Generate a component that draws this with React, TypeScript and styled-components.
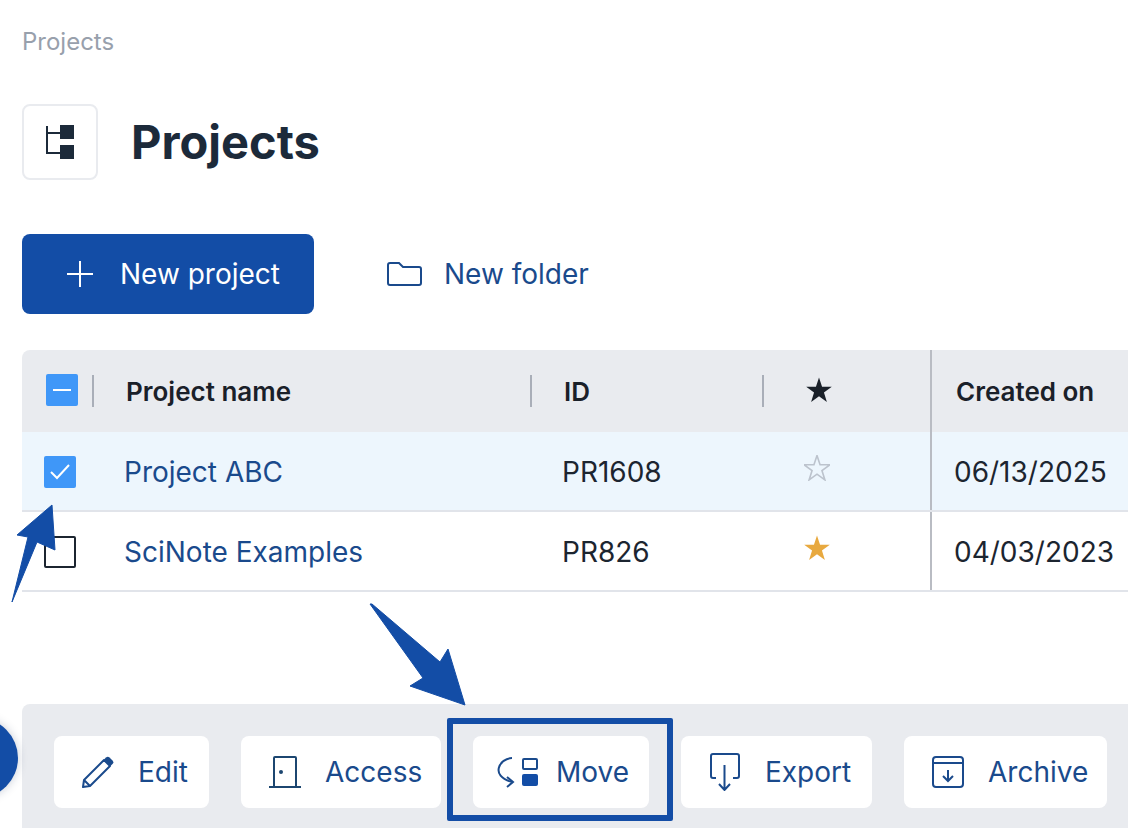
import React from 'react';
import styled, { createGlobalStyle } from 'styled-components';

const GlobalStyle = createGlobalStyle`
  html, body {
    margin: 0;
    padding: 0;
    background: #fff;
    font-family: Inter, "Liberation Sans", sans-serif;
    overflow: hidden;
  }
`;

const Page = styled.div`
  position: relative;
  width: 1128px;
  height: 828px;
  overflow: hidden;
  padding-left: 22px;
  box-sizing: border-box;
  display: flex;
  flex-direction: column;
`;

const Breadcrumb = styled.div`
  height: 84px;
  padding-top: 27px;
  box-sizing: border-box;
  font-size: 24px;
  line-height: 30px;
  color: #98a0ac;
`;

const TitleRow = styled.div`
  display: flex;
  align-items: center;
  gap: 33px;
  height: 76px;
  margin-top: 20px;
`;

const IconBox = styled.div`
  width: 76px;
  height: 76px;
  box-sizing: border-box;
  border: 2px solid #e9ebef;
  border-radius: 8px;
  display: flex;
  align-items: center;
  justify-content: center;
`;

const Title = styled.h1`
  margin: 0 0 2px;
  font-size: 47px;
  font-weight: 700;
  color: #1c2a3a;
`;

const Actions = styled.div`
  display: flex;
  align-items: center;
  margin-top: 54px;
  gap: 72px;
`;

const PrimaryButton = styled.div`
  width: 292px;
  height: 80px;
  box-sizing: border-box;
  padding-left: 44px;
  display: flex;
  align-items: center;
  gap: 26px;
  border-radius: 8px;
  background: #134da6;
  color: #fff;
  font-size: 28px;
`;

const GhostButton = styled.div`
  display: flex;
  align-items: center;
  gap: 21px;
  color: #1a4a8c;
  font-size: 28px;
`;

const Table = styled.div`
  width: 1300px;
  margin-top: 36px;
`;

const Row = styled.div<{ $kind: 'head' | 'selected' | 'plain' }>`
  display: grid;
  grid-template-columns: 72px 438px 232px 166px 1fr;
  box-sizing: border-box;
  height: ${(p) => (p.$kind === 'head' ? 82 : 80)}px;
  border-radius: ${(p) => (p.$kind === 'head' ? '8px 0 0 0' : '0')};
  background: ${(p) =>
    p.$kind === 'head' ? '#e9ebef' : p.$kind === 'selected' ? '#edf6fd' : '#fff'};
  border-bottom: ${(p) => (p.$kind === 'head' ? 'none' : '2px solid #e1e4ea')};
`;

const Cell = styled.div<{ $pad?: number; $divider?: boolean }>`
  display: flex;
  align-items: center;
  box-sizing: border-box;
  padding-left: ${(p) => p.$pad ?? 0}px;
  font-size: 28px;
  color: #1c2530;
  border-left: ${(p) => (p.$divider ? '2px solid #b9bcc3' : 'none')};
`;

const BodyCell = styled(Cell)`
  padding-top: 2px;
`;

const StarCell = styled(Cell)<{ $raise: number }>`
  padding-bottom: ${(p) => p.$raise}px;
`;

const HeadText = styled.span`
  flex: 1;
  font-size: 26px;
  font-weight: 600;
  color: #1a2029;
`;

const Separator = styled.span`
  width: 2px;
  height: 32px;
  background: #a9aeb8;
`;

const Link = styled.span`
  color: #1a4a8c;
`;

const Check = styled.div<{ $on?: boolean }>`
  width: 32px;
  height: 32px;
  box-sizing: border-box;
  border-radius: 2px;
  background: ${(p) => (p.$on ? '#3f97f8' : 'transparent')};
  border: ${(p) => (p.$on ? 'none' : '2px solid #1c2530')};
  display: flex;
  align-items: center;
  justify-content: center;
`;

const HeadCheck = styled(Check)`
  margin-bottom: 2px;
`;

const Toolbar = styled.div`
  position: absolute;
  left: 22px;
  right: 0;
  bottom: 0;
  height: 124px;
  box-sizing: border-box;
  padding: 32px;
  display: flex;
  gap: 32px;
  border-radius: 8px 0 0 0;
  background: #e9ebef;
`;

const ToolButton = styled.div<{ $width: number; $gap: number; $pad: number; $marked?: boolean }>`
  position: relative;
  flex: none;
  width: ${(p) => p.$width}px;
  height: 72px;
  box-sizing: border-box;
  padding-left: ${(p) => p.$pad}px;
  display: flex;
  align-items: center;
  gap: ${(p) => p.$gap}px;
  border-radius: 8px;
  background: #fff;
  color: #1a4a8c;
  font-size: 28px;

  ${(p) =>
    p.$marked &&
    `
    &::after {
      content: '';
      position: absolute;
      left: -26px;
      top: -18px;
      width: 226px;
      height: 103px;
      box-sizing: border-box;
      border: 6px solid #134da6;
      border-radius: 2px;
    }
  `}
`;

const Bubble = styled.div`
  position: absolute;
  left: -62px;
  top: 718px;
  width: 80px;
  height: 80px;
  border-radius: 50%;
  background: #134da6;
  box-shadow: 0 0 10px rgba(30, 50, 90, 0.25);
`;

const Arrows = styled.svg`
  position: absolute;
  left: 0;
  top: 0;
  pointer-events: none;
`;

const TreeIcon = () => (
  <svg width="30" height="36" viewBox="0 0 30 36">
    <path d="M2 2V29H16M2 9H16" fill="none" stroke="#1c2a3a" strokeWidth="2" />
    <rect x="15" y="1" width="14" height="14" fill="#1c2a3a" />
    <rect x="15" y="21" width="14" height="14" fill="#1c2a3a" />
  </svg>
);

const PlusIcon = () => (
  <svg width="28" height="28" viewBox="0 0 28 28">
    <path d="M14 1V27M1 14H27" stroke="#fff" strokeWidth="2" />
  </svg>
);

const FolderIcon = () => (
  <svg width="37" height="26" viewBox="0 0 37 26">
    <path
      d="M2 4a2 2 0 0 1 2-2h9l4 4h16a2 2 0 0 1 2 2v14a2 2 0 0 1-2 2H4a2 2 0 0 1-2-2Z"
      fill="none"
      stroke="#1a4a8c"
      strokeWidth="2"
    />
  </svg>
);

const STAR = '13,0.5 16.06,9.8 25.8,9.8 17.95,15.6 20.9,24.9 13,19.2 5.1,24.9 8.05,15.6 0.2,9.8 9.94,9.8';

const Star = ({ fill, stroke }: { fill: string; stroke?: string }) => (
  <svg width="26" height="26" viewBox="0 0 26 26">
    <polygon points={STAR} fill={fill} stroke={stroke ?? 'none'} strokeWidth="1.6" />
  </svg>
);

const PencilIcon = () => (
  <svg width="34" height="34" viewBox="0 0 34 34">
    <path
      d="M2 32l1-7L23 5l6 6L9 31Z M3 25l6 6"
      fill="none"
      stroke="#1a4a8c"
      strokeWidth="2"
      strokeLinejoin="round"
    />
    <path d="M25 2.5a2.5 2.5 0 0 1 3.5 0l3 3a2.5 2.5 0 0 1 0 3.5l-2 2-6.5-6.5Z" fill="#1a4a8c" />
  </svg>
);

const DoorIcon = () => (
  <svg width="34" height="34" viewBox="0 0 34 34">
    <path d="M6 32V3a1 1 0 0 1 1-1h20a1 1 0 0 1 1 1v29M1 32H33" fill="none" stroke="#1c4670" strokeWidth="2" />
    <circle cx="13" cy="17" r="2" fill="#1c4670" />
  </svg>
);

const MoveIcon = () => (
  <svg width="42" height="32" viewBox="0 0 42 32">
    <path d="M16 2C4 2-7 20 16 26" fill="none" stroke="#1a4a8c" strokeWidth="2" />
    <path d="M11 21l6 5-6 5" fill="none" stroke="#1a4a8c" strokeWidth="2" />
    <rect x="27" y="3" width="14" height="10" rx="1" fill="none" stroke="#1a4a8c" strokeWidth="2" />
    <rect x="26" y="18" width="16" height="12" rx="2" fill="#134da6" />
  </svg>
);

const ExportIcon = () => (
  <svg width="30" height="38" viewBox="0 0 30 38">
    <path
      d="M6 25H3a2 2 0 0 1-2-2V3a2 2 0 0 1 2-2h24a2 2 0 0 1 2 2v20a2 2 0 0 1-2 2h-4"
      fill="none"
      stroke="#1a4a8c"
      strokeWidth="2"
    />
    <path d="M14.5 12V37M9 31l5.5 6 5.5-6" fill="none" stroke="#1a4a8c" strokeWidth="2" />
  </svg>
);

const ArchiveIcon = () => (
  <svg width="32" height="32" viewBox="0 0 32 32">
    <rect x="1" y="1" width="30" height="30" rx="3" fill="none" stroke="#1a4a8c" strokeWidth="2" />
    <path d="M1 7H31" stroke="#1a4a8c" strokeWidth="2" />
    <path d="M16 14V25M11 20l5 5 5-5" fill="none" stroke="#1a4a8c" strokeWidth="2" />
  </svg>
);

const App: React.FC = () => {
  return (
    <Page>
      <GlobalStyle />
      <Breadcrumb>Projects</Breadcrumb>
      <TitleRow>
        <IconBox>
          <TreeIcon />
        </IconBox>
        <Title>Projects</Title>
      </TitleRow>
      <Actions>
        <PrimaryButton>
          <PlusIcon />
          New project
        </PrimaryButton>
        <GhostButton>
          <FolderIcon />
          New folder
        </GhostButton>
      </Actions>
      <Table>
        <Row $kind="head">
          <Cell $pad={24}>
            <HeadCheck $on>
              <svg width="18" height="2" viewBox="0 0 18 2">
                <rect width="18" height="2" fill="#fff" />
              </svg>
            </HeadCheck>
            <HeadText />
            <Separator />
          </Cell>
          <Cell $pad={32}>
            <HeadText>Project name</HeadText>
            <Separator />
          </Cell>
          <Cell $pad={32}>
            <HeadText>ID</HeadText>
            <Separator />
          </Cell>
          <StarCell $pad={42} $raise={3}>
            <Star fill="#1a2029" />
          </StarCell>
          <Cell $pad={24} $divider>
            <HeadText>Created on</HeadText>
          </Cell>
        </Row>
        <Row $kind="selected">
          <BodyCell $pad={22}>
            <Check $on>
              <svg width="20" height="16" viewBox="0 0 20 16">
                <path d="M1 8l6 6L19 1" fill="none" stroke="#fff" strokeWidth="2" />
              </svg>
            </Check>
          </BodyCell>
          <BodyCell $pad={30}>
            <Link>Project ABC</Link>
          </BodyCell>
          <BodyCell $pad={30}>PR1608</BodyCell>
          <StarCell $pad={40} $raise={7}>
            <Star fill="none" stroke="#bcc3cd" />
          </StarCell>
          <BodyCell $pad={22} $divider>
            06/13/2025
          </BodyCell>
        </Row>
        <Row $kind="plain">
          <BodyCell $pad={22}>
            <Check />
          </BodyCell>
          <BodyCell $pad={30}>
            <Link>SciNote Examples</Link>
          </BodyCell>
          <BodyCell $pad={30}>PR826</BodyCell>
          <StarCell $pad={40} $raise={7}>
            <Star fill="#e8a93f" />
          </StarCell>
          <BodyCell $pad={22} $divider>
            04/03/2023
          </BodyCell>
        </Row>
      </Table>
      <Toolbar>
        <ToolButton $width={155} $gap={23} $pad={27}>
          <PencilIcon />
          Edit
        </ToolButton>
        <ToolButton $width={200} $gap={23} $pad={27}>
          <DoorIcon />
          Access
        </ToolButton>
        <ToolButton $width={176} $gap={18} $pad={23} $marked>
          <MoveIcon />
          Move
        </ToolButton>
        <ToolButton $width={191} $gap={25} $pad={29}>
          <ExportIcon />
          Export
        </ToolButton>
        <ToolButton $width={203} $gap={24} $pad={28}>
          <ArchiveIcon />
          Archive
        </ToolButton>
      </Toolbar>
      <Bubble />
      <Arrows width="1128" height="828" viewBox="0 0 1128 828">
        <polygon
          points="52,505 55,550 37,542 12,602 28,537 17,535"
          fill="#134da6"
          stroke="#134da6"
          strokeLinejoin="round"
        />
        <polygon
          points="370,604 372,604 440,662 448,649 465,705 410,686 423,678"
          fill="#134da6"
          stroke="#134da6"
          strokeLinejoin="round"
        />
      </Arrows>
    </Page>
  );
};

export default App;
